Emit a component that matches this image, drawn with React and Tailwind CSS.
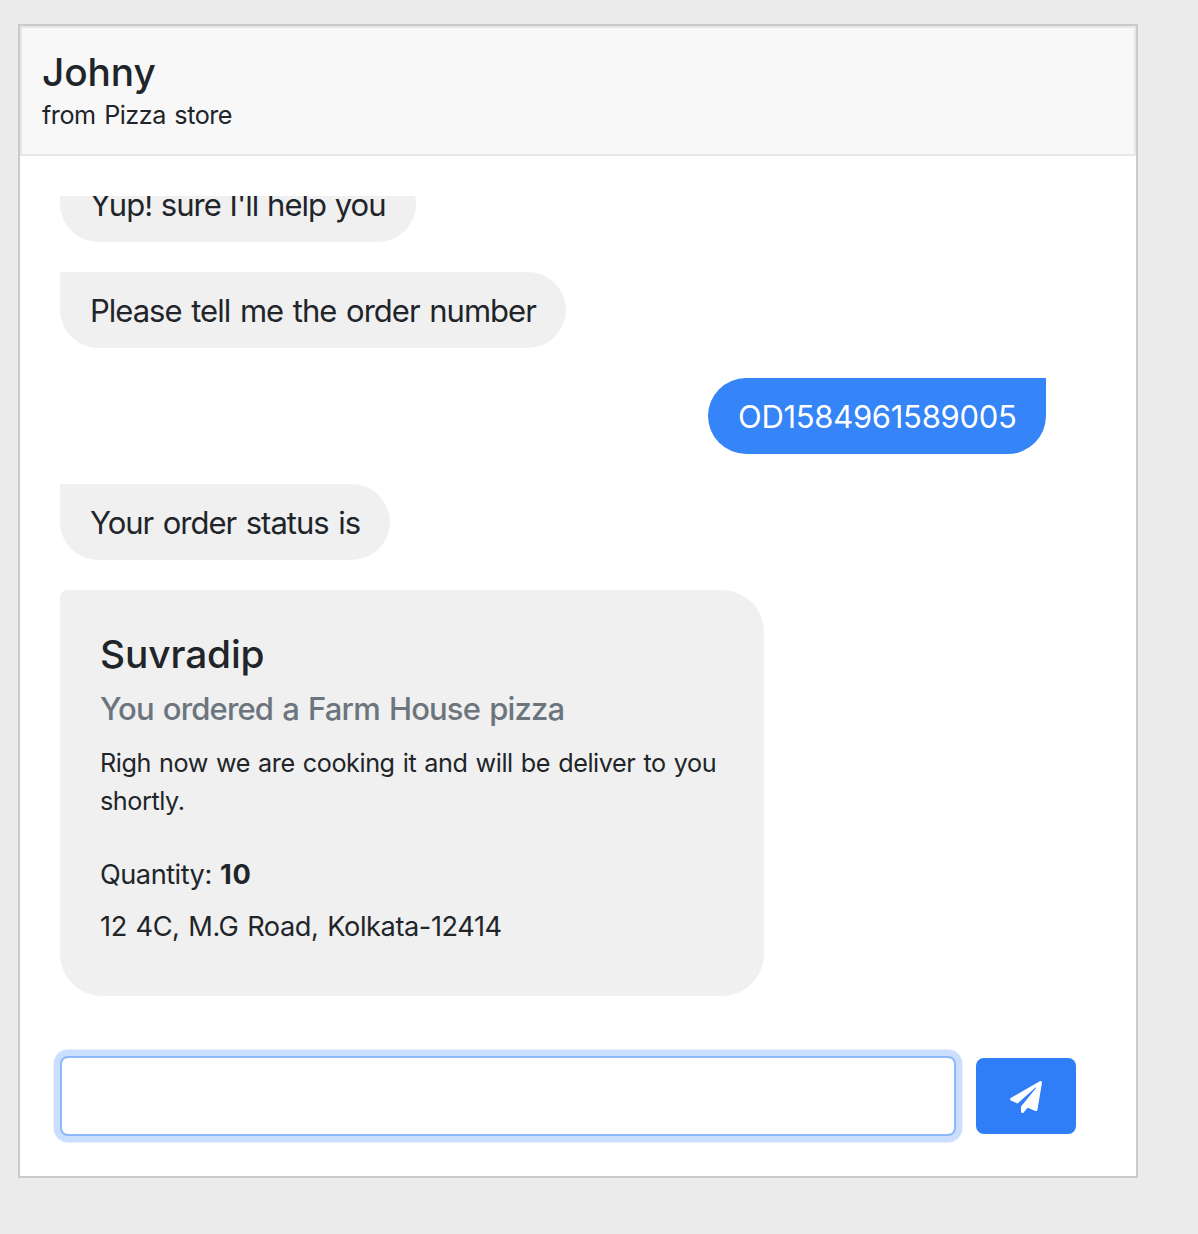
import { FaPaperPlane } from 'react-icons/fa';

const received =
  'h-[76px] shrink-0 rounded-r-[38px] rounded-bl-[38px] bg-[#f0f0f0] pl-[30px] text-[31px] leading-[78px] whitespace-nowrap';

export default function App() {
  return (
    <div className="h-[1234px] w-[1198px] bg-[#ebebeb] pt-6 pl-[18px] font-['Inter',sans-serif] text-[#212529]">
      <main className="flex h-[1154px] w-[1120px] flex-col border-2 border-[#cacaca] bg-white">
        <header className="h-[130px] shrink-0 border-2 border-[#e7e7e7] bg-[#f8f8f8] px-5 pt-5">
          <h1 className="text-[38.8px] leading-[48px] font-medium tracking-[-0.1px]">Johny</h1>
          <p className="text-[25.2px] leading-[38px] tracking-[-0.5px] [word-spacing:2px]">from Pizza store</p>
        </header>
        <section className="mt-10 ml-10 flex h-[800px] w-[986px] flex-col justify-end gap-[30px] overflow-hidden">
          <div className={`${received} w-[356px] tracking-[-1px] [word-spacing:1.1px]`}>Yup! sure I'll help you</div>
          <div className={`${received} w-[506px] tracking-[-1px] [word-spacing:2px]`}>Please tell me the order number</div>
          <div className="h-[76px] w-[338px] shrink-0 self-end rounded-l-[38px] rounded-br-[38px] bg-[#3584f8] pl-[30px] text-[31px] leading-[78px] tracking-[-0.3px] text-white">
            OD1584961589005
          </div>
          <div className={`${received} w-[330px] tracking-[-1px] [word-spacing:1.8px]`}>Your order status is</div>
          <article className="h-[406px] w-[704px] shrink-0 rounded-[42px] rounded-tl-[8px] bg-[#f0f0f0] px-10 pt-10 whitespace-nowrap">
            <h2 className="text-[38.8px] leading-[48px] font-medium tracking-[-0.1px]">Suvradip</h2>
            <h3 className="mt-3 text-[31px] leading-[38px] font-medium tracking-[-0.85px] text-[#6c757d] [word-spacing:1.7px]">
              You ordered a Farm House pizza
            </h3>
            <p className="mt-4 text-[25.2px] leading-[38px] tracking-[-0.42px] [word-spacing:1.4px]">
              Righ now we are cooking it and will be deliver to you
              <br />
              shortly.
            </p>
            <p className="mt-[34px] text-[27.2px] leading-[42px] tracking-[-0.5px] [word-spacing:1.2px]">
              Quantity: <strong className="tracking-[0.8px]">10</strong>
            </p>
            <p className="mt-[10px] text-[27.2px] leading-[42px] tracking-[-0.42px] [word-spacing:1.5px]">
              12 4C, M.G Road, Kolkata-12414
            </p>
          </article>
        </section>
        <form className="mt-[60px] ml-10 flex items-center gap-5">
          <input
            aria-label="Message"
            className="h-20 w-[896px] rounded-[8px] border-2 border-[#8abafb] bg-white px-6 text-[32px] shadow-[0_0_0_6.4px_#cbdefe] outline-none"
          />
          <button
            type="button"
            aria-label="Send"
            className="flex h-[76px] w-[100px] items-center justify-center rounded-[8px] bg-[#2f7ef7] pt-px text-white"
          >
            <FaPaperPlane size={32} />
          </button>
        </form>
      </main>
    </div>
  );
}
